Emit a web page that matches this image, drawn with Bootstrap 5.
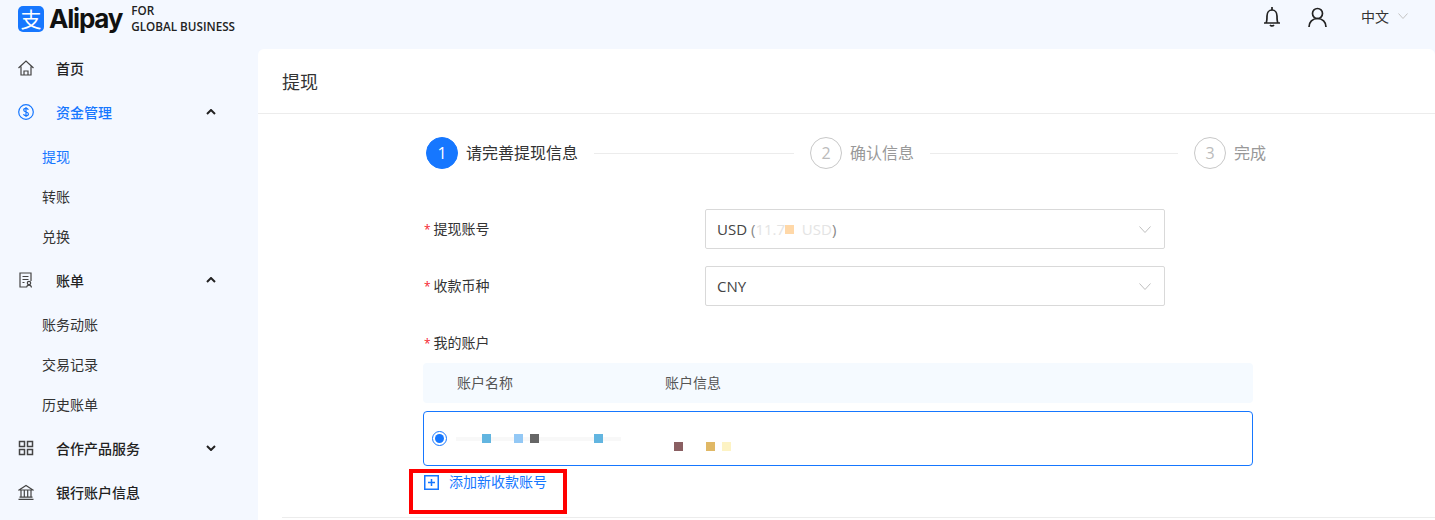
<!DOCTYPE html>
<html lang="zh-CN">
<head>
    <meta charset="UTF-8">
    <meta name="viewport" content="width=device-width, initial-scale=1.0">
    <title>Alipay 提现</title>
    <link href="https://cdn.jsdelivr.net/npm/bootstrap@5.3.0/dist/css/bootstrap.min.css" rel="stylesheet">
    <style>
        html, body { height: 520px; overflow: hidden; }
        body {
            background: #f4f8ff;
            color: #333;
            font-family: "Open Sans", "Noto Sans CJK SC", sans-serif;
            font-size: 14px;
        }
        .topbar { height: 46px; padding: 0 27px 10px 18px; }
        .logo-group { padding-top: 2px; }
        .logo-mark {
            width: 26px; height: 26px; background: #1677ff; border-radius: 5px;
            color: #fff; font-size: 21px; line-height: 26px; text-align: center;
        }
        .logo-word {
            font-family: Inter, "Liberation Sans", sans-serif; font-weight: 700; font-size: 26px;
            letter-spacing: -1.2px; color: #111; margin-left: 5px; line-height: 32px;
        }
        .logo-tag { font-size: 11.7px; font-weight: 600; line-height: 16px; color: #222; margin: -2px 0 0 9px; }
        .top-icon { color: #222; margin-bottom: 2px; }
        .user-icon { margin-left: 28px; }
        .lang-label { margin: 0 0 3px 34px; font-size: 14px; }
        .lang-chevron { margin: 0 0 5px 9px; color: #c4c4c4; }

        .side-menu { width: 258px; flex: none; }
        .menu-item { height: 44px; padding: 0 42px 0 18px; color: #222; font-weight: 500; }
        .menu-item.is-active { color: #1677ff; }
        .menu-icon { width: 16px; height: 16px; margin-right: 22px; color: #444; flex: none; }
        .is-active .menu-icon { color: #1677ff; }
        .menu-arrow { margin-left: auto; color: #222; }
        .sub-menu { padding: 3px 0 1px; }
        .sub-item { height: 40px; padding-left: 42px; line-height: 40px; color: #333; }
        .sub-item.is-active { color: #1677ff; }

        .main-panel { background: #fff; border-radius: 6px 6px 0 0; height: 471px; margin-top: 3px; overflow: hidden; flex: 1; }
        .panel-head {
            height: 65px; padding-left: 24px; line-height: 66px; font-size: 18px;
            border-bottom: 1px solid #ececec;
        }
        .panel-body { padding: 23px 0 0 165px; width: 1020px; }
        .wizard { padding-left: 3px; }
        .wizard-step { flex: 0 0 384px; }
        .wizard-step.last-step { flex: none; }
        .step-dot {
            width: 32px; height: 32px; border-radius: 50%; border: 1px solid #c8c8c8;
            color: #bbb; font-size: 16px; line-height: 30px; text-align: center; flex: none;
        }
        .step-dot.is-current { background: #1677ff; border-color: #1677ff; color: #fff; }
        .step-text { margin-left: 8px; font-size: 16px; color: #999; white-space: nowrap; }
        .step-text.is-current { color: #333; }
        .step-line { height: 1px; background: #ececec; margin: 0 16px; flex: 1; }

        .field-row { height: 40px; margin-top: 17px; }
        .field-row.first-row { margin-top: 40px; }
        .field-label { width: 282px; padding: 0 0 2px 1px; flex: none; color: #333; }
        .req-mark { color: #f5222d; margin-right: 3px; font-size: 12px; }
        .fake-select {
            width: 460px; height: 40px; padding: 0 13px 0 11px; border: 1px solid #d9d9d9; border-radius: 2px;
            color: #444; font-size: 15px;
        }
        .fake-select svg { margin-left: auto; color: #bfbfbf; }
        .blur-text { color: #e4e4e4; white-space: pre; }
        .blur-close { color: #888; }
        .blur-dot { display: inline-block; width: 9px; height: 9px; }
        .account-label { padding-left: 1px; margin-top: 26px; height: 22px; line-height: 22px; }
        .account-head {
            width: 830px; height: 40px; margin-top: 9px; background: #f5faff; border-radius: 4px;
            color: #555; line-height: 40px;
        }
        .head-name { width: 242px; padding-left: 34px; }
        .account-box {
            width: 830px; height: 55px; margin-top: 8px; padding: 0 0 0 8px;
            border: 1px solid #1677ff; border-radius: 4px; position: relative;
        }
        .radio-ring {
            width: 15px; height: 15px; border: 1px solid #1677ff; border-radius: 50%;
            margin-top: -1px; padding: 2px; flex: none;
        }
        .radio-ring i { display: block; width: 9px; height: 9px; border-radius: 50%; background: #1677ff; }
        .smudge { position: absolute; }
        .smudge-a { left: 58px; top: 22px; }
        .smudge-b { left: 90px; top: 22px; }
        .smudge-c { left: 106px; top: 22px; }
        .smudge-d { left: 170px; top: 22px; }
        .smudge-e { left: 250px; top: 30px; }
        .smudge-f { left: 282px; top: 30px; }
        .smudge-g { left: 298px; top: 30px; }
        .smudge-faint { left: 32px; top: 25px; width: 165px; height: 4px; background: #f8f8f8; }
        .add-row { height: 20px; margin-top: 6px; padding-left: 1px; color: #1677ff; position: relative; }
        .add-row svg { margin-right: 10px; }
        .add-text { margin-bottom: 2px; }
        .mark-box {
            position: absolute; left: -14px; top: -3px; width: 158px; height: 45px;
            border: 4px solid #f00;
        }
        .foot-line { height: 1px; background: #ececec; margin: 25px 0 0 -141px; width: 1153px; }
    </style>
</head>
<body>
    <header class="topbar d-flex align-items-center">
        <div class="logo-group d-flex align-items-center">
            <div class="logo-mark">支</div>
            <div class="logo-word">Alipay</div>
            <div class="logo-tag">FOR<br>GLOBAL BUSINESS</div>
        </div>
        <div class="ms-auto d-flex align-items-center">
            <svg class="top-icon" width="16" height="20" viewBox="0 0 16 20" fill="none" stroke="currentColor" stroke-width="1.700"><path d="M0 16h16M2 16c1-1.500 1-3 1-7 0-3.500 2-6 5-6s5 2.500 5 6c0 4 0 5.500 1 7"/><path d="M8 0v3M6 18c1 1.200 3 1.200 4 0"/></svg>
            <svg class="top-icon user-icon" width="19" height="20" viewBox="0 0 19 20" fill="none" stroke="currentColor" stroke-width="1.700"><circle cx="9.500" cy="6.500" r="5"/><path d="M1 20c0-5 3.500-8.500 8.500-8.500S18 15 18 20"/></svg>
            <span class="lang-label">中文</span>
            <svg class="lang-chevron" width="10" height="6" viewBox="0 0 10 6" fill="none" stroke="currentColor"><path d="M.5.500 5 5.500 9.500.500"/></svg>
        </div>
    </header>

    <div class="d-flex">
        <nav class="side-menu">
            <div class="menu-item d-flex align-items-center">
                <svg class="menu-icon" viewBox="0 0 16 16" fill="none" stroke="currentColor" stroke-width="1.200"><path d="M.5 8 8 1l7.500 7M3 6.500V15h10V6.500"/><path d="M6 15v-4h4v4"/></svg>
                <span>首页</span>
            </div>
            <div class="menu-item is-active d-flex align-items-center">
                <svg class="menu-icon" viewBox="0 0 16 16" fill="none" stroke="currentColor" stroke-width="1.200"><circle cx="8" cy="8" r="7.300"/><path d="M10.300 5.800C10 4.700 9 4.300 8 4.300c-1.300 0-2.300.7-2.300 1.800 0 2.500 4.700 1.300 4.700 3.800 0 1.100-1 1.800-2.400 1.800-1.200 0-2.200-.5-2.500-1.600M8 3v10"/></svg>
                <span>资金管理</span>
                <svg class="menu-arrow" width="10" height="6" viewBox="0 0 10 6" fill="none" stroke="currentColor" stroke-width="2"><path d="M1 5l4-4 4 4"/></svg>
            </div>
            <div class="sub-menu">
                <div class="sub-item is-active">提现</div>
                <div class="sub-item">转账</div>
                <div class="sub-item">兑换</div>
            </div>
            <div class="menu-item d-flex align-items-center">
                <svg class="menu-icon" viewBox="0 0 16 16" fill="none" stroke="currentColor" stroke-width="1.200"><path d="M8 15H2V1h11v8M4.500 4.500h6M4.500 7.500h6M4.500 10.500h2"/><circle cx="11" cy="11" r="1.700"/><path d="M8.500 15.500c.3-1.500 1.300-2.300 2.500-2.300s2.200.8 2.500 2.300"/></svg>
                <span>账单</span>
                <svg class="menu-arrow" width="10" height="6" viewBox="0 0 10 6" fill="none" stroke="currentColor" stroke-width="2"><path d="M1 5l4-4 4 4"/></svg>
            </div>
            <div class="sub-menu">
                <div class="sub-item">账务动账</div>
                <div class="sub-item">交易记录</div>
                <div class="sub-item">历史账单</div>
            </div>
            <div class="menu-item d-flex align-items-center">
                <svg class="menu-icon" viewBox="0 0 16 16" fill="none" stroke="currentColor" stroke-width="1.500"><rect x="1.500" y="1.500" width="5" height="5"/><rect x="9.500" y="1.500" width="5" height="5"/><rect x="1.500" y="9.500" width="5" height="5"/><rect x="9.500" y="9.500" width="5" height="5"/></svg>
                <span>合作产品服务</span>
                <svg class="menu-arrow" width="10" height="6" viewBox="0 0 10 6" fill="none" stroke="currentColor" stroke-width="2"><path d="M1 1l4 4 4-4"/></svg>
            </div>
            <div class="menu-item d-flex align-items-center">
                <svg class="menu-icon" viewBox="0 0 16 16" fill="none" stroke="currentColor" stroke-width="1.200"><path d="M1 6 8 1.500 15 6ZM3 6v7M6.300 6v7M9.700 6v7M13 6v7M1.500 13.200h13M.5 15.300h15"/></svg>
                <span>银行账户信息</span>
            </div>
        </nav>

        <main class="main-panel">
            <div class="panel-head">提现</div>
            <div class="panel-body">
                <div class="wizard d-flex align-items-center">
                    <div class="wizard-step d-flex align-items-center">
                        <div class="step-dot is-current">1</div>
                        <div class="step-text is-current">请完善提现信息</div>
                        <div class="step-line"></div>
                    </div>
                    <div class="wizard-step d-flex align-items-center">
                        <div class="step-dot">2</div>
                        <div class="step-text">确认信息</div>
                        <div class="step-line"></div>
                    </div>
                    <div class="wizard-step last-step d-flex align-items-center">
                        <div class="step-dot">3</div>
                        <div class="step-text">完成</div>
                    </div>
                </div>

                <div class="field-row first-row d-flex align-items-center">
                    <div class="field-label"><span class="req-mark">*</span>提现账号</div>
                    <div class="fake-select d-flex align-items-center">
                        <span>USD <span class="blur-close">(</span><span class="blur-text">11.7</span></span>
                        <span class="blur-dot" style="background:#ffd8a8"></span>
                        <span class="blur-text">  USD</span><span class="blur-close">)</span>
                        <svg width="12" height="7" viewBox="0 0 12 7" fill="none" stroke="currentColor"><path d="M.5.500 6 6.500 11.500.500"/></svg>
                    </div>
                </div>
                <div class="field-row d-flex align-items-center">
                    <div class="field-label"><span class="req-mark">*</span>收款币种</div>
                    <div class="fake-select d-flex align-items-center">
                        <span>CNY</span>
                        <svg width="12" height="7" viewBox="0 0 12 7" fill="none" stroke="currentColor"><path d="M.5.500 6 6.500 11.500.500"/></svg>
                    </div>
                </div>

                <div class="account-label"><span class="req-mark">*</span>我的账户</div>
                <div class="account-head d-flex">
                    <div class="head-name">账户名称</div>
                    <div>账户信息</div>
                </div>
                <div class="account-box d-flex align-items-center">
                    <div class="radio-ring"><i></i></div>
                    <span class="smudge smudge-faint"></span>
                    <span class="smudge blur-dot smudge-a" style="background:#62b5e0"></span>
                    <span class="smudge blur-dot smudge-b" style="background:#93c8f5"></span>
                    <span class="smudge blur-dot smudge-c" style="background:#666"></span>
                    <span class="smudge blur-dot smudge-d" style="background:#62b5e0"></span>
                    <span class="smudge blur-dot smudge-e" style="background:#8a5f62"></span>
                    <span class="smudge blur-dot smudge-f" style="background:#e0b865"></span>
                    <span class="smudge blur-dot smudge-g" style="background:#fdf3c4"></span>
                </div>
                <div class="add-row d-flex align-items-center">
                    <svg width="15" height="15" viewBox="0 0 15 15" fill="none" stroke="currentColor" stroke-width="1.500"><rect x=".75" y=".75" width="13.500" height="13.500"/><path d="M7.500 4v7M4 7.500h7"/></svg>
                    <span class="add-text">添加新收款账号</span>
                    <div class="mark-box"></div>
                </div>
                <div class="foot-line"></div>
            </div>
        </main>
    </div>
</body>
</html>
